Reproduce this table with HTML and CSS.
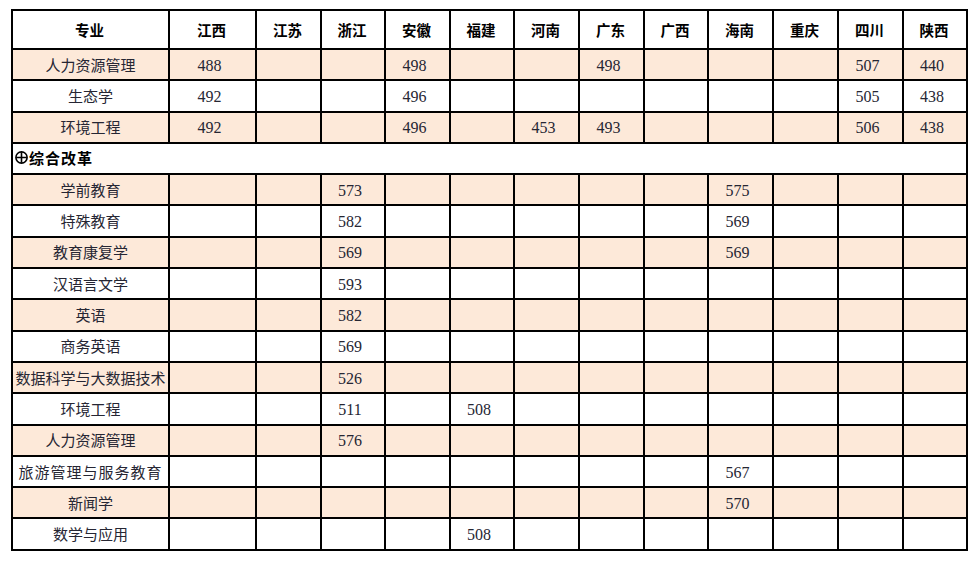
FILE: index.html
```html
<!DOCTYPE html>
<html lang="zh-CN">
<head>
<meta charset="utf-8">
<title>分数线</title>
<link rel="stylesheet" href="styles.css">
</head>
<body>
<table class="scores">
  <colgroup>
    <col class="c-major">
    <col class="c-jx">
    <col class="c-65"><col class="c-64"><col class="c-65"><col class="c-64"><col class="c-65">
    <col class="c-65"><col class="c-64"><col class="c-65"><col class="c-65"><col class="c-65"><col class="c-64">
  </colgroup>
  <thead>
    <tr class="head">
      <th>专业</th><th>江西</th><th>江苏</th><th>浙江</th><th>安徽</th><th>福建</th><th>河南</th><th>广东</th><th>广西</th><th>海南</th><th>重庆</th><th>四川</th><th>陕西</th>
    </tr>
  </thead>
  <tbody>
    <tr class="alt"><td class="major">人力资源管理</td><td>488</td><td></td><td></td><td>498</td><td></td><td></td><td>498</td><td></td><td></td><td></td><td>507</td><td>440</td></tr>
    <tr><td class="major">生态学</td><td>492</td><td></td><td></td><td>496</td><td></td><td></td><td></td><td></td><td></td><td></td><td>505</td><td>438</td></tr>
    <tr class="alt"><td class="major">环境工程</td><td>492</td><td></td><td></td><td>496</td><td></td><td>453</td><td>493</td><td></td><td></td><td></td><td>506</td><td>438</td></tr>
    <tr class="group"><td colspan="13"><span class="group-title"><svg class="plus" width="13" height="13" viewBox="0 0 13 13" aria-hidden="true"><circle cx="6.5" cy="6.5" r="5.6" fill="none" stroke="#000" stroke-width="1.6"/><path d="M6.5 1.2V11.8M1.2 6.5H11.8" stroke="#000" stroke-width="1.6"/></svg>综合改革</span></td></tr>
    <tr class="alt"><td class="major">学前教育</td><td></td><td></td><td>573</td><td></td><td></td><td></td><td></td><td></td><td>575</td><td></td><td></td><td></td></tr>
    <tr><td class="major">特殊教育</td><td></td><td></td><td>582</td><td></td><td></td><td></td><td></td><td></td><td>569</td><td></td><td></td><td></td></tr>
    <tr class="alt"><td class="major">教育康复学</td><td></td><td></td><td>569</td><td></td><td></td><td></td><td></td><td></td><td>569</td><td></td><td></td><td></td></tr>
    <tr><td class="major">汉语言文学</td><td></td><td></td><td>593</td><td></td><td></td><td></td><td></td><td></td><td></td><td></td><td></td><td></td></tr>
    <tr class="alt"><td class="major">英语</td><td></td><td></td><td>582</td><td></td><td></td><td></td><td></td><td></td><td></td><td></td><td></td><td></td></tr>
    <tr><td class="major">商务英语</td><td></td><td></td><td>569</td><td></td><td></td><td></td><td></td><td></td><td></td><td></td><td></td><td></td></tr>
    <tr class="alt"><td class="major">数据科学与大数据技术</td><td></td><td></td><td>526</td><td></td><td></td><td></td><td></td><td></td><td></td><td></td><td></td><td></td></tr>
    <tr><td class="major">环境工程</td><td></td><td></td><td>511</td><td></td><td>508</td><td></td><td></td><td></td><td></td><td></td><td></td><td></td></tr>
    <tr class="alt"><td class="major">人力资源管理</td><td></td><td></td><td>576</td><td></td><td></td><td></td><td></td><td></td><td></td><td></td><td></td><td></td></tr>
    <tr><td class="major wide">旅游管理与服务教育</td><td></td><td></td><td></td><td></td><td></td><td></td><td></td><td></td><td>567</td><td></td><td></td><td></td></tr>
    <tr class="alt"><td class="major">新闻学</td><td></td><td></td><td></td><td></td><td></td><td></td><td></td><td></td><td>570</td><td></td><td></td><td></td></tr>
    <tr><td class="major">数学与应用</td><td></td><td></td><td></td><td></td><td>508</td><td></td><td></td><td></td><td></td><td></td><td></td><td></td></tr>
  </tbody>
</table>
</body>
</html>
```
FILE: styles.css
```css
html, body {
  background: #ffffff;
}

body {
  margin: 9px 0 0 11px;
  font-family: "Liberation Serif", "Noto Sans CJK SC", serif;
  color: #262633;
}

.scores {
  border-collapse: collapse;
  table-layout: fixed;
  width: 957px;
  border: 2px solid #000;
}

.c-major { width: 157px; }
.c-jx { width: 87px; }
.c-65 { width: 65px; }
.c-64 { width: 64px; }

.scores th,
.scores td {
  border: 2px solid #000;
  padding: 2px 6px 0 0;
  text-align: center;
  vertical-align: middle;
  white-space: nowrap;
  overflow: hidden;
  font-size: 16px;
  line-height: 18px;
}

.scores td {
  height: 31.3px;
  box-sizing: border-box;
}

.scores .head th {
  height: 39px;
  box-sizing: border-box;
  font-family: "Noto Sans CJK SC", sans-serif;
  font-weight: 700;
  color: #000;
  padding: 0 2px 0 0;
  font-size: 14.5px;
}

.scores .major {
  font-family: "Liberation Serif", "Noto Sans CJK SC", serif;
  font-size: 15px;
  padding: 2px 0 0 0;
}

.scores .major.wide {
  letter-spacing: 1px;
}

.alt td {
  background: #fde9d9;
}

.group td {
  text-align: left;
  padding: 0 0 0 2px;
}

.group-title {
  display: inline-flex;
  align-items: center;
  gap: 1px;
  font-family: "Noto Sans CJK SC", sans-serif;
  font-weight: 700;
  color: #000;
  font-size: 15px;
  letter-spacing: 1px;
}

.plus {
  display: block;
}
```
